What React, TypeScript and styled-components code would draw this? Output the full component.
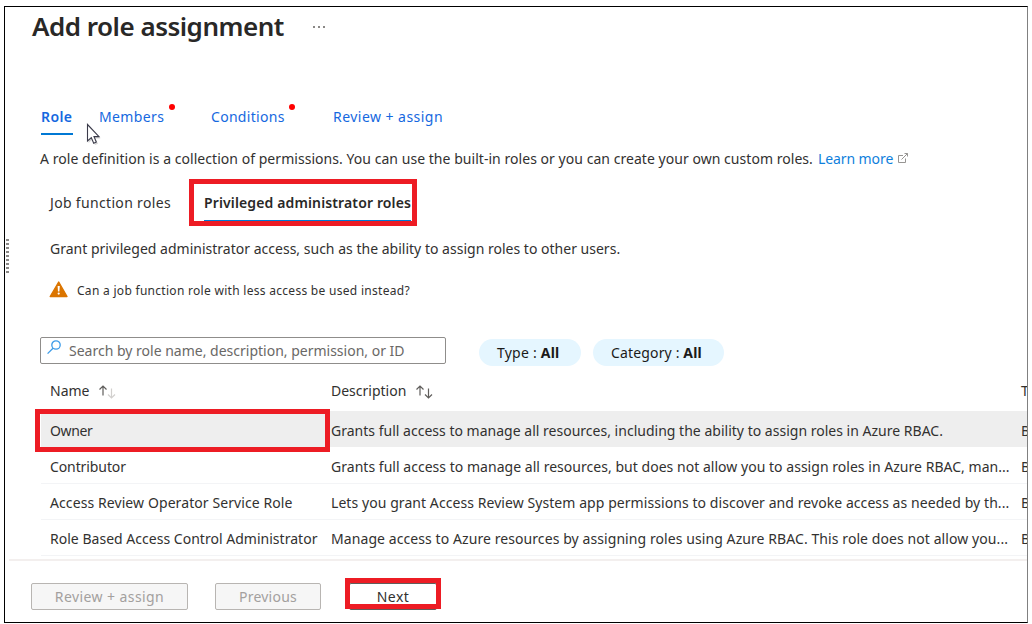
import React from "react";
import styled, { createGlobalStyle } from "styled-components";

const Global = createGlobalStyle`
  *, *::before, *::after { box-sizing: border-box; }
  body { margin: 0; background: #fff; }
`;

const Page = styled.div`
  width: 1032px;
  height: 624px;
  padding: 6px 4px 1px;
  font-family: "Noto Sans", "Open Sans", sans-serif;
  font-size: 14px;
  color: #323130;
`;

const Frame = styled.main`
  position: relative;
  display: flex;
  flex-direction: column;
  height: 617px;
  border: 1px solid #000;
  border-right-color: #808080;
  overflow: hidden;
`;

const Text = styled.span<{ $ls?: number }>`
  letter-spacing: ${(p) => p.$ls ?? 0}px;
  white-space: nowrap;
`;

const TitleBar = styled.header`
  display: flex;
  align-items: center;
  gap: 29px;
  height: 40px;
  padding-left: 27px;
`;

const Title = styled.h1`
  margin: 0 0 2px;
  font-size: 26px;
  font-weight: 600;
  line-height: 38px;
  color: #292827;
`;

const TabBar = styled.nav`
  display: flex;
  height: 34px;
  margin-top: 56px;
  padding-left: 36px;
`;

const Tab = styled.a<{ $active?: boolean; $width: number }>`
  position: relative;
  display: block;
  width: ${(p) => p.$width}px;
  height: 32px;
  line-height: 27px;
  color: #1568e0;
  font-weight: ${(p) => (p.$active ? 600 : 400)};
`;

const Underline = styled.i<{ $width: number; $top: number }>`
  position: absolute;
  left: 0;
  top: ${(p) => p.$top}px;
  width: ${(p) => p.$width}px;
  height: 2px;
  background: #0078d4;
`;

const Required = styled.i<{ $left: number }>`
  position: absolute;
  left: ${(p) => p.$left}px;
  top: 1px;
  width: 6px;
  height: 6px;
  border-radius: 50%;
  background: #f00;
`;

const Paragraph = styled.p<{ $height: number; $left: number; $small?: boolean }>`
  display: flex;
  align-items: center;
  height: ${(p) => p.$height}px;
  margin: 0;
  padding-left: ${(p) => p.$left}px;
  font-size: ${(p) => (p.$small ? 12 : 14)}px;
`;

const Link = styled.a`
  margin-left: 5px;
  color: #0f7fdc;
`;

const ExternalIcon = styled.svg`
  margin: 0 0 1px 4px;
`;

const SubTabs = styled.nav`
  display: flex;
  height: 46px;
  padding-left: 45px;
`;

const SubTab = styled.a<{ $active?: boolean; $width: number }>`
  position: relative;
  width: ${(p) => p.$width}px;
  line-height: 46px;
  color: ${(p) => (p.$active ? "#292827" : "#323130")};
  font-weight: ${(p) => (p.$active ? 600 : 400)};
`;

const WarnIcon = styled.svg`
  margin: 0 8px 2px 0;
`;

const Filters = styled.div`
  display: flex;
  height: 30px;
  margin-top: 27px;
  padding-left: 35px;
`;

const SearchBox = styled.div`
  display: flex;
  width: 406px;
  height: 27px;
  margin-right: 33px;
  padding-left: 6px;
  border: 1px solid #8f8d8b;
  border-radius: 2px;
  line-height: 26px;
  color: #6a6866;
`;

const SearchIcon = styled.svg`
  margin: 2px 8px 0 0;
`;

const Pill = styled.div<{ $width: number }>`
  width: ${(p) => p.$width}px;
  height: 27px;
  margin: 2px 12px 0 0;
  padding-left: 18px;
  border-radius: 14px;
  background: #e5f6ff;
  line-height: 27px;
  color: #1b1a19;
`;

const Table = styled.section`
  display: flex;
  flex-direction: column;
  padding-left: 36px;
  margin-top: 4px;
`;

const Row = styled.div<{ $selected?: boolean; $head?: boolean }>`
  display: grid;
  grid-template-columns: 281px 690px 60px;
  align-items: center;
  height: ${(p) => (p.$head ? 40 : p.$selected ? 37 : 36)}px;
  padding-left: 9px;
  padding-top: ${(p) => (p.$head ? 0 : 2)}px;
  border-bottom: 1px solid ${(p) => (p.$head || p.$selected ? "transparent" : "#f3f4f6")};
  background: ${(p) => (p.$selected ? "#eeeeee" : "transparent")};
  background-clip: padding-box;
`;

const Cell = styled.div`
  display: flex;
  align-items: center;
`;

const SortIcon = styled.svg`
  margin-left: 8px;
`;

const Footer = styled.footer`
  display: flex;
  flex: 1;
  margin: 3px 0 0 4px;
  padding: 22px 0 0 22px;
  border-top: 2px solid #f3efee;
`;

const Button = styled.button<{ $width: number; $gap: number; $primary?: boolean }>`
  width: ${(p) => p.$width}px;
  height: 27px;
  margin: 0 ${(p) => p.$gap}px 0 0;
  padding: 0;
  border: 1px solid ${(p) => (p.$primary ? "#605e5c" : "#b8b5b2")};
  border-radius: 2px;
  background: ${(p) => (p.$primary ? "#fff" : "#f6f6f6")};
  color: ${(p) => (p.$primary ? "#323130" : "#a3a09e")};
  font: inherit;
  line-height: 23px;
`;

const Highlight = styled.div<{ $x: number; $y: number; $w: number; $h: number }>`
  position: absolute;
  left: ${(p) => p.$x}px;
  top: ${(p) => p.$y}px;
  width: ${(p) => p.$w}px;
  height: ${(p) => p.$h}px;
  border: 5px solid #ed1c24;
`;

const Cursor = styled.svg`
  position: absolute;
  left: 80px;
  top: 116px;
`;

const Grip = styled.div`
  position: absolute;
  left: 1px;
  top: 232px;
  width: 3px;
  height: 34px;
  background: repeating-linear-gradient(#8a8886 0 2px, transparent 2px 4px);
`;

const Sort = ({ faded }: { faded?: boolean }) => (
  <SortIcon width="20" height="16" viewBox="0 0 20 16" fill="none" stroke="#605e5c" strokeWidth="1.2">
    <path d="M6 12.5V3M2.5 6.5L6 3L9.5 6.5" />
    <path d="M14.5 5.5V15M11 11.5L14.5 15L18 11.5" stroke={faded ? "#d2d0ce" : "#605e5c"} />
  </SortIcon>
);

const rows = [
  { name: "Owner", nls: -0.4, text: "Grants full access to manage all resources, including the ability to assign roles in Azure RBAC.", ls: 0.012 },
  { name: "Contributor", nls: -0.1, text: "Grants full access to manage all resources, but does not allow you to assign roles in Azure RBAC, man...", ls: 0.03 },
  { name: "Access Review Operator Service Role", nls: 0.09, text: "Lets you grant Access Review System app permissions to discover and revoke access as needed by th...", ls: 0.068 },
  { name: "Role Based Access Control Administrator", nls: 0.02, text: "Manage access to Azure resources by assigning roles using Azure RBAC. This role does not allow you...", ls: 0.08 },
];

export default function App() {
  return (
    <Page>
      <Global />
      <Frame>
        <TitleBar>
          <Title><Text $ls={-0.5}>Add role assignment</Text></Title>
          <svg width="14" height="4" viewBox="0 0 14 4" fill="#8a8886">
            <rect x="0" y="1" width="2" height="2" />
            <rect x="5" y="1" width="2" height="2" />
            <rect x="10" y="1" width="2" height="2" />
          </svg>
        </TitleBar>
        <TabBar>
          <Tab $active $width={58}><Text $ls={0.4}>Role</Text><Underline $width={32} $top={30} /></Tab>
          <Tab $width={112}><Text $ls={0.38}>Members</Text><Required $left={70} /></Tab>
          <Tab $width={122}><Text $ls={0.3}>Conditions</Text><Required $left={78} /></Tab>
          <Tab $width={120}><Text $ls={0.46}>Review + assign</Text></Tab>
        </TabBar>
        <Paragraph $height={43} $left={35}>
          <Text $ls={0.042}>A role definition is a collection of permissions. You can use the built-in roles or you can create your own custom roles.</Text>
          <Link><Text $ls={-0.08}>Learn more</Text></Link>
          <ExternalIcon width="12" height="12" viewBox="0 0 12 12" fill="none" stroke="#979593">
            <path d="M6 3.5H1.5V10.5H8.5V6.5M4.5 7.5L10.5 1.5M7.5 1.5H10.5V4.5" />
          </ExternalIcon>
        </Paragraph>
        <SubTabs>
          <SubTab $width={154}><Text $ls={0.33}>Job function roles</Text></SubTab>
          <SubTab $active $width={210}><Text $ls={0.13}>Privileged administrator roles</Text><Underline $width={207} $top={40} /></SubTab>
        </SubTabs>
        <Paragraph $height={44} $left={45}>
          <Text $ls={0.01}>Grant privileged administrator access, such as the ability to assign roles to other users.</Text>
        </Paragraph>
        <Paragraph $height={40} $left={44} $small>
          <WarnIcon width="20" height="18" viewBox="0 0 20 18">
            <path d="M9.7 2L18 16.5H1.2Z" fill="#db7500" stroke="#db7500" strokeWidth="1.4" strokeLinejoin="round" />
            <path d="M8.6 6h2.2l-.4 5.4H9z" fill="#fff" />
            <circle cx="9.7" cy="13.6" r="1.1" fill="#fff" />
          </WarnIcon>
          <Text $ls={0.29}>Can a job function role with less access be used instead?</Text>
        </Paragraph>
        <Filters>
          <SearchBox>
            <SearchIcon width="14" height="15" viewBox="0 0 14 15" fill="none" stroke="#3b9be8" strokeWidth="1.3">
              <circle cx="9" cy="5" r="4.2" />
              <path d="M6 8.2L.6 13.6" />
            </SearchIcon>
            <Text>Search by role name, description, permission, or ID</Text>
          </SearchBox>
          <Pill $width={102}><Text $ls={0.22}>Type : <b>All</b></Text></Pill>
          <Pill $width={131}><Text $ls={0.15}>Category : <b>All</b></Text></Pill>
        </Filters>
        <Table>
          <Row $head>
            <Cell><Text>Name</Text><Sort faded /></Cell>
            <Cell><Text>Description</Text><Sort /></Cell>
            <Cell><Text>Type</Text></Cell>
          </Row>
          {rows.map((r, i) => (
            <Row key={r.name} $selected={i === 0}>
              <Cell><Text $ls={r.nls}>{r.name}</Text></Cell>
              <Cell><Text $ls={r.ls}>{r.text}</Text></Cell>
              <Cell><Text>BuiltInRole</Text></Cell>
            </Row>
          ))}
        </Table>
        <Footer>
          <Button $width={157} $gap={27}><Text $ls={0.42}>Review + assign</Text></Button>
          <Button $width={106} $gap={28}><Text $ls={0.25}>Previous</Text></Button>
          <Button $width={88} $gap={0} $primary><Text $ls={0.5}>Next</Text></Button>
        </Footer>
        <Grip />
        <Highlight $x={184} $y={172} $w={228} $h={47} />
        <Highlight $x={30} $y={402} $w={295} $h={43} />
        <Highlight $x={340} $y={571} $w={96} $h={31} />
        <Cursor width="18" height="24" viewBox="0 0 18 24">
          <path d="M3.5 3.5V20L7.5 16.5L10 22L13 20.8L10.5 15.5H15.5Z" fill="#999" opacity=".4" />
          <path d="M2.5 1.5V18L6.3 14.6L8.7 20.2L11.3 19L9 13.6H14Z" fill="#fff" stroke="#3b3b4a" strokeWidth="1.1" />
        </Cursor>
      </Frame>
    </Page>
  );
}
